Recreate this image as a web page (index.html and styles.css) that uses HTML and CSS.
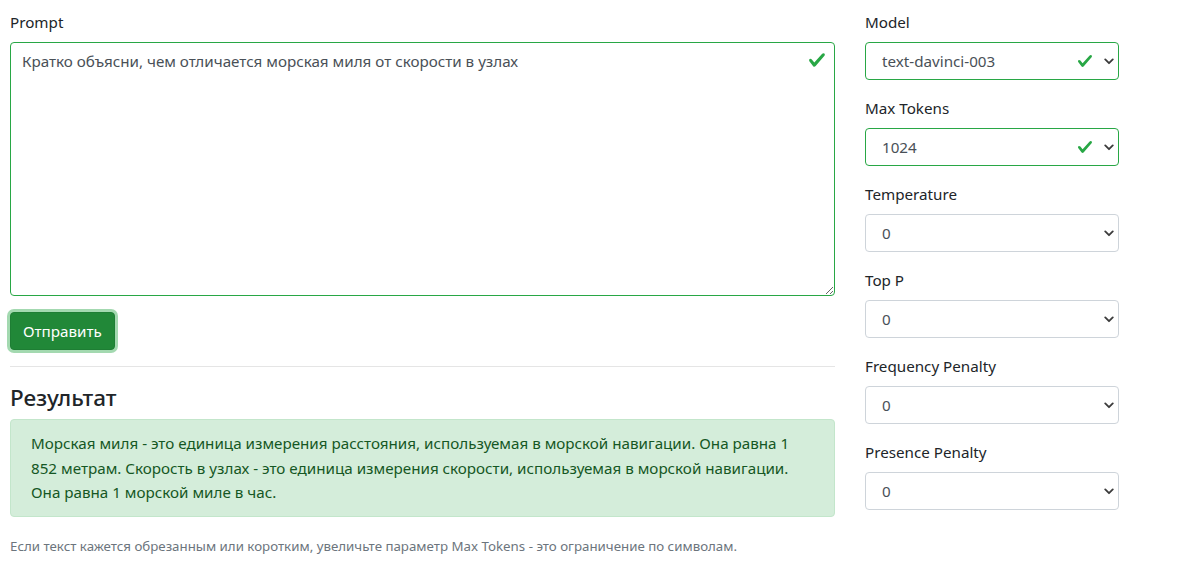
FILE: index.html
```html
<!DOCTYPE html>
<html lang="ru">
<head>
<meta charset="utf-8">
<title>Prompt</title>
<link rel="stylesheet" href="styles.css">
</head>
<body>
<div class="page">
  <div class="main">
    <div class="group">
      <label class="label" for="prompt">Prompt</label>
      <div class="ta-wrap">
        <textarea id="prompt" class="textarea">Кратко объясни, чем отличается морская миля от скорости в узлах</textarea>
        <svg class="ta-check" viewBox="0 0 8 8" width="18" height="18"><path fill="#28a745" d="M2.3 6.73L.6 4.53c-.4-1.04.46-1.4 1.1-.8l1.1 1.4 3.4-3.8c.6-.63 1.6-.27 1.2.7l-4 4.6c-.43.5-.8.4-1.1.1z"/></svg>
      </div>
    </div>
    <button class="btn">Отправить</button>
    <hr class="rule">
    <h4 class="heading">Результат</h4>
    <div class="alert">Морская миля - это единица измерения расстояния, используемая в морской навигации. Она равна 1<br>852 метрам. Скорость в узлах - это единица измерения скорости, используемая в морской навигации.<br>Она равна 1 морской миле в час.</div>
    <p class="note">Если текст кажется обрезанным или коротким, увеличьте параметр Max Tokens - это ограничение по символам.</p>
  </div>
  <div class="side">
    <div class="group">
      <div class="label">Model</div>
      <div class="select valid"><span class="sel-text">text-davinci-003</span><svg class="check" viewBox="0 0 8 8" width="16" height="16"><path fill="#28a745" d="M2.3 6.73L.6 4.53c-.4-1.04.46-1.4 1.1-.8l1.1 1.4 3.4-3.8c.6-.63 1.6-.27 1.2.7l-4 4.6c-.43.5-.8.4-1.1.1z"/></svg><svg class="chev" viewBox="0 0 12 8" width="10" height="7"><path fill="none" stroke="#3c3c3c" stroke-width="2.2" stroke-linecap="round" stroke-linejoin="round" d="M1.5 1.5l4.5 4.5 4.5-4.5"/></svg></div>
    </div>
    <div class="group">
      <div class="label">Max Tokens</div>
      <div class="select valid"><span class="sel-text">1024</span><svg class="check" viewBox="0 0 8 8" width="16" height="16"><path fill="#28a745" d="M2.3 6.73L.6 4.53c-.4-1.04.46-1.4 1.1-.8l1.1 1.4 3.4-3.8c.6-.63 1.6-.27 1.2.7l-4 4.6c-.43.5-.8.4-1.1.1z"/></svg><svg class="chev" viewBox="0 0 12 8" width="10" height="7"><path fill="none" stroke="#3c3c3c" stroke-width="2.2" stroke-linecap="round" stroke-linejoin="round" d="M1.5 1.5l4.5 4.5 4.5-4.5"/></svg></div>
    </div>
    <div class="group">
      <div class="label">Temperature</div>
      <div class="select"><span class="sel-text">0</span><svg class="chev" viewBox="0 0 12 8" width="10" height="7"><path fill="none" stroke="#3c3c3c" stroke-width="2.2" stroke-linecap="round" stroke-linejoin="round" d="M1.5 1.5l4.5 4.5 4.5-4.5"/></svg></div>
    </div>
    <div class="group">
      <div class="label">Top P</div>
      <div class="select"><span class="sel-text">0</span><svg class="chev" viewBox="0 0 12 8" width="10" height="7"><path fill="none" stroke="#3c3c3c" stroke-width="2.2" stroke-linecap="round" stroke-linejoin="round" d="M1.5 1.5l4.5 4.5 4.5-4.5"/></svg></div>
    </div>
    <div class="group">
      <div class="label">Frequency Penalty</div>
      <div class="select"><span class="sel-text">0</span><svg class="chev" viewBox="0 0 12 8" width="10" height="7"><path fill="none" stroke="#3c3c3c" stroke-width="2.2" stroke-linecap="round" stroke-linejoin="round" d="M1.5 1.5l4.5 4.5 4.5-4.5"/></svg></div>
    </div>
    <div class="group">
      <div class="label">Presence Penalty</div>
      <div class="select"><span class="sel-text">0</span><svg class="chev" viewBox="0 0 12 8" width="10" height="7"><path fill="none" stroke="#3c3c3c" stroke-width="2.2" stroke-linecap="round" stroke-linejoin="round" d="M1.5 1.5l4.5 4.5 4.5-4.5"/></svg></div>
    </div>
  </div>
</div>
</body>
</html>
```
FILE: styles.css
```css
* { box-sizing: border-box; }
body {
  margin: 0;
  font-family: "Noto Sans", "Open Sans", sans-serif;
  font-size: 15.2px;
  line-height: 24px;
  color: #212529;
  background: #fff;
}
.page {
  display: flex;
  gap: 30px;
  padding: 10px 10px 0 10px;
}
.main { width: 825px; }
.side { width: 254px; }
.group { margin-bottom: 16px; }
.label {
  display: block;
  margin-bottom: 8px;
  line-height: 24px;
}
.ta-wrap { position: relative; }
.textarea {
  display: block;
  width: 100%;
  height: 254px;
  margin: 0;
  border: 1px solid #28a745;
  border-radius: 4px;
  padding: 6px 40px 6px 11px;
  font-family: inherit;
  font-size: 15.2px;
  line-height: 24px;
  color: #495057;
  resize: vertical;
  outline: none;
}
.ta-check {
  position: absolute;
  top: 9px;
  right: 9px;
}
.btn {
  display: block;
  height: 38px;
  padding: 0 12px;
  margin: 0;
  font-family: inherit;
  font-size: 15.2px;
  line-height: 24px;
  color: #fff;
  background: #218838;
  border: 1px solid #1e7e34;
  border-radius: 4px;
  box-shadow: 0 0 0 3px rgba(72, 180, 97, 0.5);
}
.rule {
  margin: 16px 0;
  border: 0;
  border-top: 1px solid rgba(0, 0, 0, 0.1);
}
.heading {
  margin: 0 0 6px;
  font-size: 22.5px;
  font-weight: 500;
  line-height: 30px;
}
.alert {
  padding: 11px 20px;
  background: #d4edda;
  border: 1px solid #c3e6cb;
  border-radius: 4px;
  color: #155724;
  line-height: 24.5px;
}
.note {
  margin: 17px 0 0;
  font-size: 13.3px;
  line-height: 24px;
  color: #6c757d;
}
.select {
  display: flex;
  align-items: center;
  height: 38px;
  border: 1px solid #ced4da;
  border-radius: 4px;
  padding: 0 4px 0 16px;
  color: #495057;
}
.select.valid { border-color: #28a745; }
.sel-text { flex: 1; }
.check { margin-right: 11px; }
.chev { display: block; }
```
